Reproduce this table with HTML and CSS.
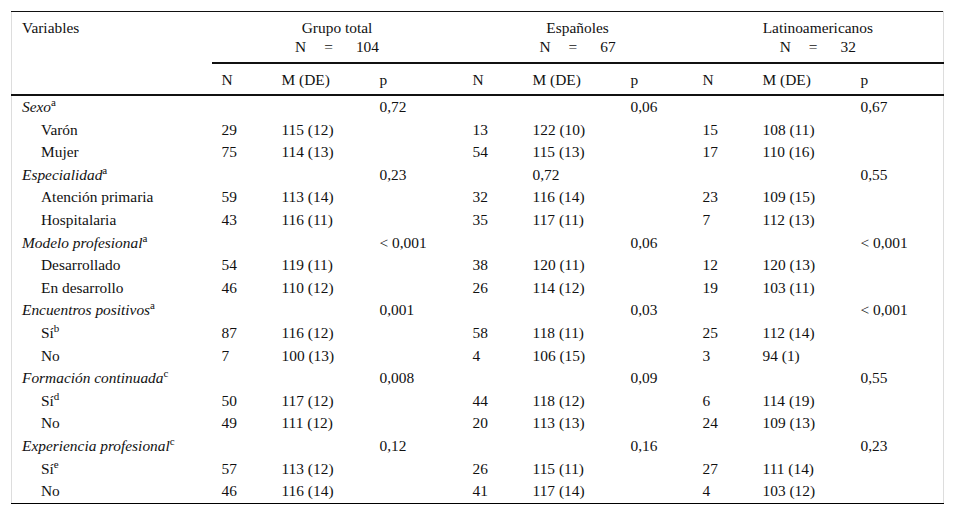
FILE: index.html
```html
<!DOCTYPE html>
<html lang="es">
<head>
<meta charset="utf-8">
<title>Tabla</title>
<link rel="stylesheet" href="styles.css">
</head>
<body>
<div class="wrap">
<table class="tbl">
  <colgroup>
    <col class="c-var">
    <col class="c-n"><col class="c-m"><col class="c-p1">
    <col class="c-n"><col class="c-m"><col class="c-p2">
    <col class="c-n"><col class="c-m"><col class="c-p1">
  </colgroup>
  <thead>
    <tr class="h1">
      <th rowspan="2" class="var">Variables</th>
      <th colspan="3" class="grp">Grupo total<br><span class="eq">N<span class="sp">=</span>104</span></th>
      <th colspan="3" class="grp">Españoles<br><span class="eq">N<span class="sp">=</span>67</span></th>
      <th colspan="3" class="grp">Latinoamericanos<br><span class="eq">N<span class="sp">=</span>32</span></th>
    </tr>
    <tr class="h2">
      <th>N</th><th>M (DE)</th><th>p</th>
      <th>N</th><th>M (DE)</th><th>p</th>
      <th>N</th><th>M (DE)</th><th>p</th>
    </tr>
  </thead>
  <tbody>
    <tr><td><i>Sexo</i><sup>a</sup></td><td></td><td></td><td>0,72</td><td></td><td></td><td>0,06</td><td></td><td></td><td>0,67</td></tr>
    <tr><td class="ind">Varón</td><td>29</td><td>115 (12)</td><td></td><td>13</td><td>122 (10)</td><td></td><td>15</td><td>108 (11)</td><td></td></tr>
    <tr><td class="ind">Mujer</td><td>75</td><td>114 (13)</td><td></td><td>54</td><td>115 (13)</td><td></td><td>17</td><td>110 (16)</td><td></td></tr>
    <tr><td><i>Especialidad</i><sup>a</sup></td><td></td><td></td><td>0,23</td><td></td><td>0,72</td><td></td><td></td><td></td><td>0,55</td></tr>
    <tr><td class="ind">Atención primaria</td><td>59</td><td>113 (14)</td><td></td><td>32</td><td>116 (14)</td><td></td><td>23</td><td>109 (15)</td><td></td></tr>
    <tr><td class="ind">Hospitalaria</td><td>43</td><td>116 (11)</td><td></td><td>35</td><td>117 (11)</td><td></td><td>7</td><td>112 (13)</td><td></td></tr>
    <tr><td><i>Modelo profesional</i><sup>a</sup></td><td></td><td></td><td>&lt; 0,001</td><td></td><td></td><td>0,06</td><td></td><td></td><td>&lt; 0,001</td></tr>
    <tr><td class="ind">Desarrollado</td><td>54</td><td>119 (11)</td><td></td><td>38</td><td>120 (11)</td><td></td><td>12</td><td>120 (13)</td><td></td></tr>
    <tr><td class="ind">En desarrollo</td><td>46</td><td>110 (12)</td><td></td><td>26</td><td>114 (12)</td><td></td><td>19</td><td>103 (11)</td><td></td></tr>
    <tr><td><i>Encuentros positivos</i><sup>a</sup></td><td></td><td></td><td>0,001</td><td></td><td></td><td>0,03</td><td></td><td></td><td>&lt; 0,001</td></tr>
    <tr><td class="ind">Sí<sup>b</sup></td><td>87</td><td>116 (12)</td><td></td><td>58</td><td>118 (11)</td><td></td><td>25</td><td>112 (14)</td><td></td></tr>
    <tr><td class="ind">No</td><td>7</td><td>100 (13)</td><td></td><td>4</td><td>106 (15)</td><td></td><td>3</td><td>94 (1)</td><td></td></tr>
    <tr><td><i>Formación continuada</i><sup>c</sup></td><td></td><td></td><td>0,008</td><td></td><td></td><td>0,09</td><td></td><td></td><td>0,55</td></tr>
    <tr><td class="ind">Sí<sup>d</sup></td><td>50</td><td>117 (12)</td><td></td><td>44</td><td>118 (12)</td><td></td><td>6</td><td>114 (19)</td><td></td></tr>
    <tr><td class="ind">No</td><td>49</td><td>111 (12)</td><td></td><td>20</td><td>113 (13)</td><td></td><td>24</td><td>109 (13)</td><td></td></tr>
    <tr><td><i>Experiencia profesional</i><sup>c</sup></td><td></td><td></td><td>0,12</td><td></td><td></td><td>0,16</td><td></td><td></td><td>0,23</td></tr>
    <tr><td class="ind">Sí<sup>e</sup></td><td>57</td><td>113 (12)</td><td></td><td>26</td><td>115 (11)</td><td></td><td>27</td><td>111 (14)</td><td></td></tr>
    <tr class="last"><td class="ind">No</td><td>46</td><td>116 (14)</td><td></td><td>41</td><td>117 (14)</td><td></td><td>4</td><td>103 (12)</td><td></td></tr>
  </tbody>
</table>
</div>
</body>
</html>
```

FILE: styles.css
```css
html, body {
  margin: 0;
  padding: 0;
  background: #fff;
}
.wrap {
  padding: 11px 0 0 11px;
}
.tbl {
  border-collapse: collapse;
  table-layout: fixed;
  width: 932px;
  font-family: "Liberation Serif", serif;
  font-size: 15.4px;
  color: #111;
  border-top: 1px solid #111;
  border-left: 1px solid #ddd;
  border-right: 1px solid #ddd;
  border-bottom: 1px solid #000;
}
.c-var { width: 200px; }
.c-n { width: 60px; }
.c-m { width: 98px; }
.c-p1 { width: 93px; }
.c-p2 { width: 72px; }
.tbl th {
  font-weight: normal;
  text-align: left;
  padding: 6px 10px 5px;
  line-height: 19px;
  vertical-align: top;
}
.tbl .h1 th {
  padding-top: 6px;
  padding-bottom: 6px;
}
.tbl th.grp {
  text-align: center;
  border-bottom: 2px solid #111;
}
.tbl th.var {
  border-bottom: 2px solid #111;
}
.tbl .h2 th {
  border-bottom: 2px solid #111;
}
.eq {
  display: inline-block;
}
.sp {
  display: inline-block;
  margin: 0 23px 0 18px;
}
.tbl td {
  padding: 2px 10px;
  line-height: 18.6px;
  height: 18.6px;
  white-space: nowrap;
  vertical-align: middle;
}
.tbl td.ind {
  padding-left: 29px;
}
sup {
  font-size: 11px;
  line-height: 0;
  vertical-align: 6px;
}
```
